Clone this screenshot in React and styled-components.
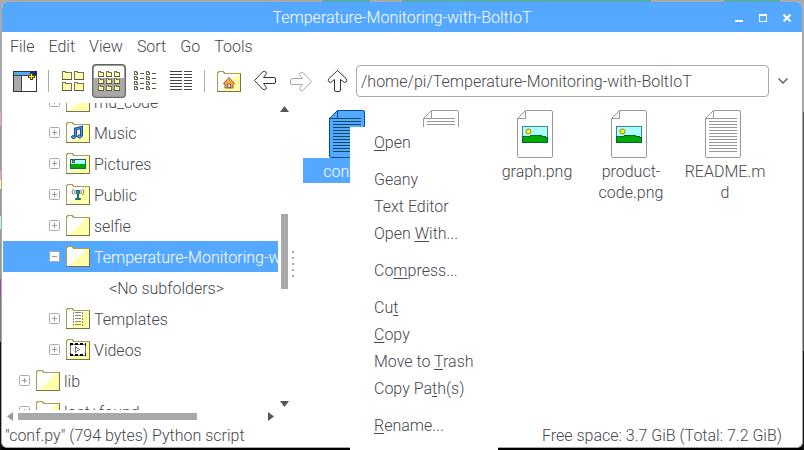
import React from "react";
import styled, { createGlobalStyle, css } from "styled-components";

const blue = "#55a8ff";
const ink = "#47474c";
const grey = "#a9a9a9";

const GlobalStyle = createGlobalStyle`
  * { box-sizing: border-box; }
  body { margin: 0; overflow: hidden; }
  body, button, input {
    font-family: Roboto, "Liberation Sans", sans-serif;
    font-size: 16px;
    font-weight: 300;
    line-height: 20px;
    color: ${ink};
  }
  button { border: 0; padding: 0; background: none; white-space: nowrap; }
  svg { display: block; flex: none; }
`;

const Desktop = styled.div`
  position: relative;
  display: flex;
  height: 100vh;
  padding: 2px 1px;
  overflow: hidden;
  background:
    linear-gradient(90deg, transparent 40%, #55aaaa 40% 46%, transparent 46% 50%, #55aaaa 50% 81%, transparent 81% 90%, #55aaaa 90% 97%, transparent 97%) top / 100% 2px no-repeat,
    linear-gradient(#aaa 0 25%, #ff9da5 25% 28%, #999 28% 38%, #ff9da5 38% 40%, #ffff90 40% 42%, #999 42% 48%, #9ff 48% 51%, #999 51% 62%, #a04aaa 62% 66%, #777 66% 76%, #111 76%) left / 2px 100% no-repeat,
    linear-gradient(#aaa 0 25%, #555 25% 78%, #111 78%) right / 2px 100% no-repeat,
    linear-gradient(#aaa 0 80%, #000 80%);
`;

const Window = styled.main`
  flex: 1;
  min-width: 0;
  display: flex;
  flex-direction: column;
  background: #fff;
  border: 1px solid ${grey};
  border-top: 0;
  border-radius: 6px;
  overflow: hidden;
`;

const TitleBar = styled.header`
  display: flex;
  align-items: center;
  height: 30px;
  flex: none;
  padding: 2px 3px 0 75px;
  background: ${blue};
  color: #fff;
`;

const Title = styled.h1`
  flex: 1;
  margin: 0;
  text-align: center;
  font-size: 16px;
  font-weight: 300;
  line-height: 20px;
  white-space: nowrap;
`;

const WindowButton = styled.button`
  display: grid;
  place-items: center;
  width: 24px;
  height: 24px;
`;

const MenuBar = styled.nav`
  display: flex;
  flex: none;
  gap: 14px;
  height: 28px;
  padding: 2px 8px 0;
  align-items: center;
`;

const Toolbar = styled.div`
  display: flex;
  flex: none;
  align-items: center;
  gap: 2px;
  padding: 4px 7px 5px 6px;
`;

const ToolButton = styled.button`
  display: grid;
  place-items: center;
  flex: none;
  width: 34px;
  height: 34px;
  border-radius: 4px;
  ${(p) => p.$pressed && css`
    border: 2px solid #999;
    background: linear-gradient(#fff 0 12px, ${grey} 12px);
    outline: 1px solid #666;
    outline-offset: -1px;
  `}
`;

const Divider = styled.span`
  flex: none;
  width: 1px;
  height: 22px;
  margin: 0 5px 0 4px;
  background: ${grey};
`;

const PathInput = styled.input`
  flex: 1;
  min-width: 0;
  height: 32px;
  padding: 0 4px;
  border: 1px solid ${grey};
  border-radius: 4px;
  background: #fff;
  outline: 0;
`;

const HistoryButton = styled.button`
  display: grid;
  place-items: center;
  width: 24px;
  height: 32px;
`;

const Panes = styled.div`
  flex: 1;
  min-height: 0;
  display: grid;
  grid-template-columns: 288px 6px 1fr;
`;

const Sidebar = styled.aside`
  display: grid;
  min-height: 0;
  grid-template-columns: minmax(0, 1fr) 12px;
  grid-template-rows: minmax(0, 1fr) 14px;
`;

const TreeView = styled.div`
  overflow: hidden;
  min-height: 0;
  padding-left: 1px;
`;

const TreeList = styled.ul`
  list-style: none;
  margin: -17px 0 0;
  padding: 0;
`;

const TreeRow = styled.li`
  display: flex;
  align-items: center;
  height: 31px;
  padding-left: ${(p) => (p.$depth === 2 ? 102 : p.$depth === 1 ? 46 : 16)}px;
  white-space: nowrap;
  background: ${(p) => (p.$selected ? blue : "none")};
  color: ${(p) => (p.$selected ? "#fff" : ink)};
  overflow: hidden;
`;

const Expander = styled.button`
  display: grid;
  margin-right: 6px;
`;

const NodeName = styled.span`
  margin-left: 4px;
  padding-top: 2px;
`;

const VerticalBar = styled.div`
  display: flex;
  flex-direction: column;
  align-items: center;
  padding: 3px 0;
`;

const VerticalThumb = styled.div`
  width: 7px;
  height: 75px;
  margin: 102px 0 auto;
  background: ${grey};
`;

const HorizontalBar = styled.div`
  display: flex;
  align-items: center;
  padding: 0 4px 2px 5px;
`;

const HorizontalThumb = styled.div`
  width: 179px;
  height: 7px;
  margin: 0 auto 0 5px;
  background: ${grey};
`;

const Splitter = styled.div`
  display: flex;
  flex-direction: column;
  align-items: center;
  justify-content: center;
  gap: 4px;
`;

const Dot = styled.span`
  width: 2px;
  height: 2px;
  background: ${grey};
`;

const Files = styled.div`
  display: grid;
  grid-template-columns: repeat(auto-fill, 88px);
  align-content: start;
  gap: 6px;
  padding: 7px;
`;

const FileItem = styled.figure`
  display: flex;
  flex-direction: column;
  align-items: center;
  margin: 0;
`;

const FileName = styled.figcaption`
  width: 88px;
  padding: 3px 0 1px 4px;
  text-align: center;
  line-height: 21px;
  overflow-wrap: anywhere;
  background: ${(p) => (p.$selected ? blue : "none")};
  color: ${(p) => (p.$selected ? "#fff" : ink)};
`;

const StatusBar = styled.footer`
  display: flex;
  flex: none;
  justify-content: space-between;
  height: 23px;
  padding: 2px 20px 0 3px;
  white-space: nowrap;
`;

const ContextMenu = styled.div`
  position: absolute;
  left: 350px;
  top: 127px;
  bottom: 0;
  width: 148px;
  padding-top: 2px;
  background: #fff;
`;

const MenuItem = styled.button`
  display: block;
  width: 100%;
  height: 27px;
  padding-left: 24px;
  text-align: left;
`;

const MenuGroup = styled.div`
  margin-bottom: 10px;
`;

const Mnemonic = styled.span`
  text-decoration: underline;
  text-decoration-thickness: 1px;
  text-decoration-skip-ink: none;
  text-underline-offset: 2px;
`;

const emblems = {
  music: (
    <g shapeRendering="auto">
      <path fill="none" stroke="#174c9c" strokeWidth="3" d="M9.500 15V7l6-1.500v9" />
      <path fill="none" stroke="#4c9aff" strokeWidth="1" d="M9.500 15V7l6-1.500v9" />
      <ellipse cx="7.500" cy="15" rx="2" ry="1.500" fill="#4c9aff" stroke="#174c9c" />
      <ellipse cx="13.500" cy="14.500" rx="2" ry="1.500" fill="#4c9aff" stroke="#174c9c" />
    </g>
  ),
  pictures: (
    <g>
      <path fill="#aff" d="M4 6h16v5H4z" />
      <path fill="#0a0" d="M4 11h16v5H4z" />
      <path fill="none" stroke="#126a50" d="M4.500 6.500h15v9h-15z" />
      <path fill="#ff0" stroke="#555" d="M6.500 7.500h2v2h-2z" />
    </g>
  ),
  public: (
    <g shapeRendering="auto">
      <path fill="none" stroke="#777" d="M7.500 5Q4.500 8 7.500 11M9.500 6Q7.500 8 9.500 10M16.500 5Q19.500 8 16.500 11M14.500 6Q16.500 8 14.500 10" />
      <path fill="#12a9a4" stroke="#126a70" d="M10.500 6.500h3v3h-1v5h2v1h-5v-1h2v-5h-1z" />
    </g>
  ),
  templates: (
    <g stroke="#888">
      <path strokeDasharray="2 1" d="M7.500 4v14M16.500 4v14" />
      <path d="M9 4.500h6M9 7.500h6M9 10.500h6M9 13.500h6M9 16.500h6" />
    </g>
  ),
  videos: (
    <g>
      <path fill="#fff" stroke="#777" d="M4.500 5.500h15v11h-15z" />
      <path stroke="#000" strokeWidth="2" strokeDasharray="3 2" d="M4 5h16M4 16h16" />
      <path stroke="#111" d="M4.500 4v3M19.500 4v3M4.500 14v3M19.500 14v3" />
      <path fill="#fff" stroke="#777" d="M9.500 8v5l4-2.500z" />
    </g>
  ),
  home: (
    <g shapeRendering="auto">
      <path fill="#ffa64d" stroke="#a65a20" d="M6.500 12.500l5.500-6 5.500 6-1.500.5v4H8v-4z" />
      <path fill="#fff" stroke="#666" d="M10.500 16.500v-3.500h3v3.500z" />
    </g>
  ),
};

const Folder = ({ emblem }) => (
  <svg width="24" height="21" viewBox="0 0 24 21" shapeRendering="crispEdges" aria-hidden="true">
    <path fill="#fff" d="M1 1h6v2h16v17H1z" />
    <path fill="#ffa" d="M3 20L21 3h2v17z" />
    <path fill="none" stroke="#a9a04c" d="M.5 20V2.500l1-2h5l1 2h16V20" />
    <path fill="none" stroke="#77724a" d="M0 20.500h24M23.500 3v17" />
    {emblem && emblems[emblem]}
  </svg>
);

const Box = ({ open }) => (
  <svg width="11" height="11" viewBox="0 0 11 11" aria-hidden="true">
    <rect x=".5" y=".5" width="10" height="10" rx="1" fill="#fff" stroke="#aaa" />
    <path stroke="#999" d={open ? "M3 5.500h5" : "M3 5.500h5M5.500 3v5"} />
  </svg>
);

const Page = ({ kind, selected }) => {
  const line = selected ? "#06508f" : "#999";
  return (
    <svg width="36" height="48" viewBox="0 0 36 48" aria-hidden="true">
      <path fill={selected ? blue : "#fff"} stroke={line} d="M8.500.5H34q1.500 0 1.500 1.500v44q0 1.500-1.500 1.500H2Q.5 47.500.5 46V8.500z" />
      <path fill="none" stroke={line} d="M.5 8.500h8v-8" />
      {kind === "image" ? (
        <g shapeRendering="crispEdges">
          <path fill="#aff" stroke="#3c8790" d="M5.500 16.500h25v16h-25z" />
          <path fill="#0a0" stroke="#063" d="M5.500 27q6-1 13-1.500 6 0 12 2v5h-25z" />
          <circle cx="11.500" cy="21.500" r="2.500" fill="#ff0" stroke="#a47a20" shapeRendering="auto" />
        </g>
      ) : (
        <path stroke={selected ? "#064b60" : "#999"} d="M8 8.500h24M4 11.500h28M4 14.500h28M4 17.500h28M4 20.500h28M4 23.500h28M4 26.500h28M4 29.500h28M4 32.500h28M4 35.500h28M4 38.500h28M4 41.500h28" />
      )}
    </svg>
  );
};

const miniFolder = (x, y, w, h) => (
  <g key={`${x}-${y}`}>
    <path fill="#ffa" stroke="#77724a" d={`M${x + 0.5} ${y + 0.5}h${Math.floor(w / 3)}v1h${w - 1 - Math.floor(w / 3)}v${h - 2}h${1 - w}z`} />
    <path stroke="#555" d={`M${x} ${y + h - 0.5}h${w}`} />
  </g>
);

const NewTabIcon = () => (
  <svg width="24" height="21" viewBox="0 0 24 21" shapeRendering="crispEdges" aria-hidden="true">
    <path fill="#fff" stroke="#333" d="M.5.500h23v20H.5z" />
    <path fill="#aaa" d="M1 5h7v15H1z" />
    <path fill={blue} d="M1 1h17v4H1z" />
    <path fill="#228" d="M17 0h7v4h-7z" />
    <path stroke="#444" d="M1 4.500h22M8.500 5v15" />
    <path fill="#ff0" stroke="#554b00" d="M17.500 2.500h2v2h2v2h-2v2h-2v-2h-2v-2h2z" />
  </svg>
);

const LargeIcons = () => (
  <svg width="22" height="20" viewBox="0 0 22 20" shapeRendering="crispEdges" aria-hidden="true">
    {[0, 11].flatMap((y) => [0, 12].map((x) => miniFolder(x, y, 10, 9)))}
  </svg>
);

const SmallIcons = () => (
  <svg width="22" height="20" viewBox="0 0 22 20" shapeRendering="crispEdges" aria-hidden="true">
    {[0, 7, 14].flatMap((y) => [0, 8, 16].map((x) => miniFolder(x, y, 6, 6)))}
  </svg>
);

const CompactIcons = () => (
  <svg width="22" height="20" viewBox="0 0 22 20" shapeRendering="crispEdges" aria-hidden="true">
    {[0, 5, 10, 15].flatMap((y) =>
      [0, 12].map((x) => (
        <g key={`${x}-${y}`}>
          <path fill="#ffa" stroke="#666" d={`M${x + 0.5} ${y + 0.5}h2v1h1v2h-3z`} />
          <path stroke="#555" d={`M${x + 6} ${y + 2.5}h4`} />
        </g>
      ))
    )}
  </svg>
);

const DetailLines = () => (
  <svg width="22" height="20" viewBox="0 0 22 20" shapeRendering="crispEdges" aria-hidden="true">
    <path stroke="#444" d={[0, 3, 6, 9, 12, 15, 18].map((y) => `M0 ${y + 0.5}h12M14 ${y + 0.5}h8`).join("")} />
  </svg>
);

const Arrow = ({ dir }) => (
  <svg width="24" height="24" viewBox="0 0 24 24" aria-hidden="true">
    <path
      fill="#fff"
      stroke={dir === "forward" ? "#aaa" : "#333"}
      transform={dir === "forward" ? "rotate(180 12 12)" : dir === "up" ? "rotate(90 12 12)" : undefined}
      d="M1.500 11.500L9.500 3q2-1.500 3.500 0 1 1.500-.5 3L10.500 8.500h10.500q1.500 0 1.500 1.500v3q0 1.500-1.500 1.500H10.500l2 2.500q1.500 1.500.5 3-1.500 1.500-3.500 0z"
    />
  </svg>
);

const triangles = {
  up: [9, 6, "M4.500 0L9 6H0z"],
  down: [9, 6, "M0 0h9L4.500 6z"],
  left: [6, 9, "M6 0v9L0 4.500z"],
  right: [6, 9, "M0 0l6 4.500L0 9z"],
};

const Triangle = ({ dir, color = "#555" }) => {
  const [w, h, d] = triangles[dir];
  return (
    <svg width={w} height={h} viewBox={`0 0 ${w} ${h}`} aria-hidden="true">
      <path fill={color} d={d} />
    </svg>
  );
};

const tree = [
  { name: "mu_code", depth: 1 },
  { name: "Music", depth: 1, emblem: "music" },
  { name: "Pictures", depth: 1, emblem: "pictures" },
  { name: "Public", depth: 1, emblem: "public" },
  { name: "selfie", depth: 1 },
  { name: "Temperature-Monitoring-with-BoltIoT", depth: 1, selected: true },
  { name: "<No subfolders>", depth: 2 },
  { name: "Templates", depth: 1, emblem: "templates" },
  { name: "Videos", depth: 1, emblem: "videos" },
  { name: "lib", depth: 0 },
  { name: "lost+found", depth: 0 },
];

const files = [
  { name: "conf.py", kind: "text", selected: true },
  { name: "main.py", kind: "text" },
  { name: "graph.png", kind: "image" },
  { name: "product-code.png", kind: "image" },
  { name: "README.md", kind: "text" },
];

const menu = [
  [["", "O", "pen"]],
  [["Geany"], ["Text Editor"], ["Open ", "W", "ith..."]],
  [["Co", "m", "press..."]],
  [["Cu", "t", ""], ["", "C", "opy"], ["Move to ", "T", "rash"], ["Copy Pa", "t", "h(s)"]],
  [["", "R", "ename..."]],
];

export default function App() {
  return (
    <Desktop>
      <GlobalStyle />
      <Window>
        <TitleBar>
          <Title>Temperature-Monitoring-with-BoltIoT</Title>
          <WindowButton aria-label="Minimize">
            <svg width="8" height="8" viewBox="0 0 8 8"><path stroke="#fff" strokeWidth="2" d="M0 7h8" /></svg>
          </WindowButton>
          <WindowButton aria-label="Maximize">
            <svg width="8" height="8" viewBox="0 0 8 8"><path fill="none" stroke="#fff" d="M.5 1v6.500h7V1" /><path fill="#fff" d="M0 0h8v2H0z" /></svg>
          </WindowButton>
          <WindowButton aria-label="Close">
            <svg width="8" height="8" viewBox="0 0 8 8"><path stroke="#fff" strokeWidth="2" d="M.5.500l7 7M7.500.5l-7 7" /></svg>
          </WindowButton>
        </TitleBar>
        <MenuBar aria-label="Menu">
          {["File", "Edit", "View", "Sort", "Go", "Tools"].map((m) => <button key={m}>{m}</button>)}
        </MenuBar>
        <Toolbar>
          <ToolButton aria-label="New tab"><NewTabIcon /></ToolButton>
          <Divider />
          <ToolButton aria-label="Large icons"><LargeIcons /></ToolButton>
          <ToolButton aria-label="Small icons" aria-pressed="true" $pressed><SmallIcons /></ToolButton>
          <ToolButton aria-label="Compact list"><CompactIcons /></ToolButton>
          <ToolButton aria-label="Detailed list"><DetailLines /></ToolButton>
          <Divider />
          <ToolButton aria-label="Home"><Folder emblem="home" /></ToolButton>
          <ToolButton aria-label="Back"><Arrow dir="back" /></ToolButton>
          <ToolButton aria-label="Forward"><Arrow dir="forward" /></ToolButton>
          <ToolButton aria-label="Up"><Arrow dir="up" /></ToolButton>
          <PathInput aria-label="Path" defaultValue="/home/pi/Temperature-Monitoring-with-BoltIoT" />
          <HistoryButton aria-label="Path history">
            <svg width="10" height="6" viewBox="0 0 10 6"><path fill="none" stroke="#666" strokeWidth="1.500" d="M.5.500L5 5 9.500.5" /></svg>
          </HistoryButton>
        </Toolbar>
        <Panes>
          <Sidebar>
            <TreeView>
              <TreeList>
                {tree.map((n) => (
                  <TreeRow key={n.name} $depth={n.depth} $selected={n.selected}>
                    {n.depth < 2 && (
                      <>
                        <Expander aria-label={`Toggle ${n.name}`}><Box open={n.selected} /></Expander>
                        <Folder emblem={n.emblem} />
                      </>
                    )}
                    <NodeName>{n.name}</NodeName>
                  </TreeRow>
                ))}
              </TreeList>
            </TreeView>
            <VerticalBar>
              <Triangle dir="up" />
              <VerticalThumb />
              <Triangle dir="down" />
            </VerticalBar>
            <HorizontalBar>
              <Triangle dir="left" color="#999" />
              <HorizontalThumb />
              <Triangle dir="right" />
            </HorizontalBar>
          </Sidebar>
          <Splitter>
            {[0, 1, 2, 3, 4].map((i) => <Dot key={i} />)}
          </Splitter>
          <Files>
            {files.map((f) => (
              <FileItem key={f.name}>
                <Page kind={f.kind} selected={f.selected} />
                <FileName $selected={f.selected}>{f.name}</FileName>
              </FileItem>
            ))}
          </Files>
        </Panes>
        <StatusBar>
          <span>"conf.py" (794 bytes) Python script</span>
          <span>Free space: 3.7 GiB (Total: 7.2 GiB)</span>
        </StatusBar>
      </Window>
      <ContextMenu role="menu">
        {menu.map((group, i) => (
          <MenuGroup key={i}>
            {group.map(([before, key, after]) => (
              <MenuItem key={before + key} role="menuitem">
                {before}{key && <Mnemonic>{key}</Mnemonic>}{after}
              </MenuItem>
            ))}
          </MenuGroup>
        ))}
      </ContextMenu>
    </Desktop>
  );
}
